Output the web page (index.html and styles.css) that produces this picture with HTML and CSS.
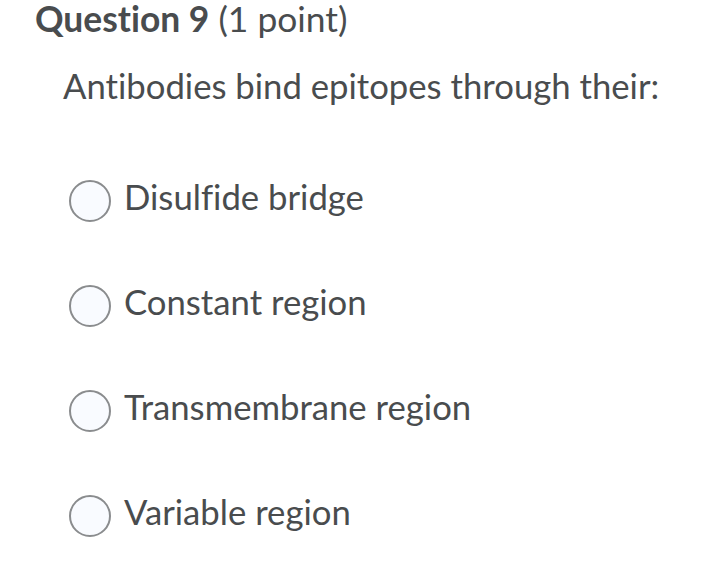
FILE: index.html
```html
<!DOCTYPE html>
<html>
<head>
<meta charset="utf-8">
<link rel="stylesheet" href="styles.css">
</head>
<body>
<div class="page">
  <h1 class="title"><strong>Question 9</strong> <span class="pts">(1 point)</span></h1>
  <p class="stem">Antibodies bind epitopes through their:</p>
  <ul class="options">
    <li class="option"><span class="radio"></span><span class="label">Disulfide bridge</span></li>
    <li class="option"><span class="radio"></span><span class="label">Constant region</span></li>
    <li class="option"><span class="radio"></span><span class="label">Transmembrane region</span></li>
    <li class="option"><span class="radio"></span><span class="label">Variable region</span></li>
  </ul>
</div>
</body>
</html>
```
FILE: styles.css
```css
html, body { margin: 0; padding: 0; background: #fff; }
body { font-family: Lato, "Open Sans", sans-serif; color: #494c4e; font-variant-ligatures: none; }
.page { padding: 1px 0 0 35px; }
.title { margin: 0; font-size: 35.4px; line-height: 36px; font-weight: 400; }
.title strong { font-weight: 700; }
.stem { margin: 29px 0 0 28px; font-size: 34.7px; line-height: 40px; }
.options { list-style: none; margin: 74px 0 0 34px; padding: 0; display: flex; flex-direction: column; gap: 63px; }
.option { display: flex; align-items: flex-start; gap: 13px; height: 42px; font-size: 34.7px; }
.radio { box-sizing: border-box; width: 42px; height: 42px; border: 2px solid #8a8c8e; border-radius: 50%; background: #f9fbff; flex: none; }
.label { line-height: 34px; }
```
